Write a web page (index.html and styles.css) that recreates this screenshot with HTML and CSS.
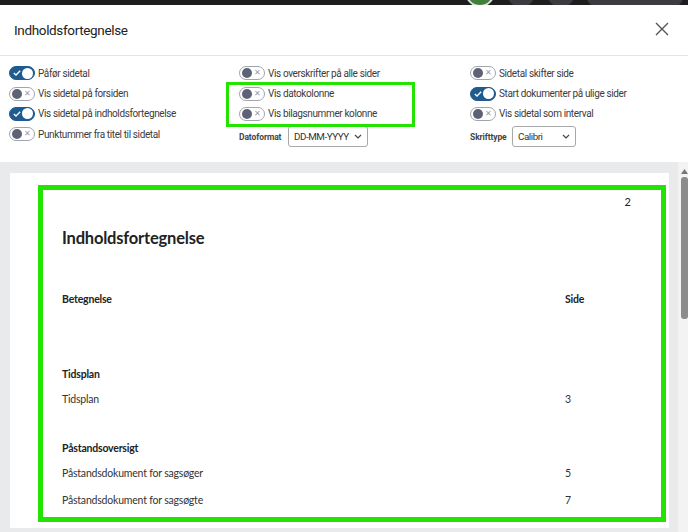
FILE: index.html
```html
<!DOCTYPE html>
<html lang="da">
<head>
<meta charset="utf-8">
<title>Indholdsfortegnelse</title>
<link rel="stylesheet" href="styles.css">
</head>
<body>
<div class="topbar">
  <span class="bg-dot green"></span>
  <span class="bg-dot"></span>
  <span class="bg-dot"></span>
  <span class="bg-pill"></span>
</div>
<div class="modal">
  <header class="modal-header">
    <h1 class="modal-title">Indholdsfortegnelse</h1>
    <svg class="close" width="14" height="14" viewBox="0 0 14 14"><path d="M1 1 L13 13 M13 1 L1 13" stroke="#555" stroke-width="1.4" fill="none"/></svg>
  </header>
  <section class="options">
    <div class="col">
      <label class="opt"><span class="tg on"><svg class="chk" width="8" height="6" viewBox="0 0 8 6"><path d="M0.8 3 L3 5 L7.2 0.8" stroke="#fff" stroke-width="1.3" fill="none"/></svg><span class="knob"></span></span>Påfør sidetal</label>
      <label class="opt"><span class="tg"><span class="knob"></span><span class="x">✕</span></span>Vis sidetal på forsiden</label>
      <label class="opt"><span class="tg on"><svg class="chk" width="8" height="6" viewBox="0 0 8 6"><path d="M0.8 3 L3 5 L7.2 0.8" stroke="#fff" stroke-width="1.3" fill="none"/></svg><span class="knob"></span></span>Vis sidetal på indholdsfortegnelse</label>
      <label class="opt"><span class="tg"><span class="knob"></span><span class="x">✕</span></span>Punktummer fra titel til sidetal</label>
    </div>
    <div class="col">
      <label class="opt"><span class="tg"><span class="knob"></span><span class="x">✕</span></span>Vis overskrifter på alle sider</label>
      <label class="opt"><span class="tg"><span class="knob"></span><span class="x">✕</span></span>Vis datokolonne</label>
      <label class="opt"><span class="tg"><span class="knob"></span><span class="x">✕</span></span>Vis bilagsnummer kolonne</label>
      <div class="sel-row"><span class="sel-label">Datoformat</span><span class="select w80">DD-MM-YYYY<svg class="chev" width="8" height="5" viewBox="0 0 8 5"><path d="M1 1 L4 4 L7 1" stroke="#444" stroke-width="1.2" fill="none"/></svg></span></div>
    </div>
    <div class="col">
      <label class="opt"><span class="tg"><span class="knob"></span><span class="x">✕</span></span>Sidetal skifter side</label>
      <label class="opt"><span class="tg on"><svg class="chk" width="8" height="6" viewBox="0 0 8 6"><path d="M0.8 3 L3 5 L7.2 0.8" stroke="#fff" stroke-width="1.3" fill="none"/></svg><span class="knob"></span></span>Start dokumenter på ulige sider</label>
      <label class="opt"><span class="tg"><span class="knob"></span><span class="x">✕</span></span>Vis sidetal som interval</label>
      <div class="sel-row"><span class="sel-label">Skrifttype</span><span class="select w64">Calibri<svg class="chev" width="8" height="5" viewBox="0 0 8 5"><path d="M1 1 L4 4 L7 1" stroke="#444" stroke-width="1.2" fill="none"/></svg></span></div>
    </div>
    <div class="mark-small"></div>
  </section>
  <section class="preview">
    <div class="page">
      <div class="mark-big">
        <div class="pno">2</div>
        <h2 class="doc-title">Indholdsfortegnelse</h2>
        <div class="row head"><span>Betegnelse</span><span class="num">Side</span></div>
        <div class="row group g1"><span>Tidsplan</span></div>
        <div class="row item"><span>Tidsplan</span><span class="num">3</span></div>
        <div class="row group g2"><span>Påstandsoversigt</span></div>
        <div class="row item"><span>Påstandsdokument for sagsøger</span><span class="num">5</span></div>
        <div class="row item i2"><span>Påstandsdokument for sagsøgte</span><span class="num">7</span></div>
      </div>
    </div>
    <div class="scrollbar">
      <svg class="up" width="7" height="5" viewBox="0 0 7 5"><path d="M0 5 L3.5 0 L7 5 Z" fill="#777"/></svg>
      <div class="thumb"></div>
    </div>
  </section>
</div>
</body>
</html>
```

FILE: styles.css
```css
* { box-sizing: border-box; }
html, body { margin: 0; padding: 0; }
body {
  width: 688px;
  height: 532px;
  overflow: hidden;
  background: #fff;
  font-family: Roboto, "Liberation Sans", sans-serif;
  color: #333;
}
.topbar {
  height: 5px;
  background: #1e1e1e;
  display: flex;
  align-items: flex-end;
  overflow: hidden;
  padding-left: 465px;
  gap: 12px;
}
.bg-dot {
  flex: none;
  width: 28px;
  height: 28px;
  border-radius: 50%;
  background: #3a3c40;
  margin-bottom: -2px;
}
.bg-dot.green { background: #3f7f3a; border: 2px solid #ddd; width: 30px; height: 30px; }
.bg-pill {
  flex: none;
  width: 96px;
  height: 28px;
  border-radius: 10px;
  background: #3a3c40;
  margin-bottom: -2px;
}
.modal { background: #fff; }
.modal-header {
  height: 51px;
  border-bottom: 1px solid #e4e4e4;
  display: flex;
  align-items: center;
  justify-content: space-between;
  padding: 0 19px 0 14px;
}
.modal-title {
  margin: 0;
  font-size: 13.5px;
  font-weight: 400;
  color: #222;
  letter-spacing: -0.35px;
}
.close { margin-top: -2px; }
.options {
  position: relative;
  height: 106px;
  display: grid;
  grid-template-columns: 230px 231px 1fr;
  padding: 7px 0 0 9px;
}
.col { display: flex; flex-direction: column; }
.opt {
  height: 20.4px;
  display: flex;
  align-items: center;
  gap: 3px;
  font-size: 10px;
  letter-spacing: -0.38px;
  color: #3c3c3c;
  white-space: nowrap;
}
.tg {
  flex: none;
  width: 26px;
  height: 14px;
  border-radius: 7px;
  border: 1px solid #a3a5ad;
  background: #fff;
  display: flex;
  align-items: center;
  justify-content: space-between;
  padding: 0 2px 0 2px;
}
.tg .knob {
  width: 10px;
  height: 10px;
  border-radius: 50%;
  background: #5e6276;
}
.tg .x { font-size: 8px; color: #9a9ca5; line-height: 1; margin-right: 1px; }
.tg.on { background: #1f5b8f; border-color: #1f5b8f; padding: 0 1px 0 3px; }
.tg.on .knob { background: #fff; width: 11px; height: 11px; }
.sel-row {
  display: flex;
  align-items: center;
  margin-top: 2px;
  height: 21px;
}
.sel-label {
  font-size: 8.5px;
  font-weight: 700;
  color: #444;
  width: 49px;
  letter-spacing: -0.1px;
}
.col:nth-child(3) .sel-label { width: 42px; }
.select {
  height: 21px;
  border: 1px solid #a8a8a8;
  border-radius: 3px;
  display: flex;
  align-items: center;
  justify-content: space-between;
  padding: 0 5px 0 5px;
  font-size: 9.8px;
  letter-spacing: -0.45px;
  white-space: nowrap;
  color: #333;
}
.w80 { width: 80px; }
.w64 { width: 64px; }
.mark-small {
  position: absolute;
  left: 226px;
  top: 26px;
  width: 189px;
  height: 45px;
  border: 3px solid #22e400;
  pointer-events: none;
}
.preview {
  height: 370px;
  background: #e9eaec;
  display: flex;
  padding: 11px 0 0 10px;
}
.page {
  width: 659px;
  height: 355px;
  background: #fff;
  padding: 12px 3px 0 28px;
  flex: none;
}
.mark-big {
  height: 337px;
  border: 5px solid #22e400;
  padding: 0 0 0 19px;
  font-family: Lato, "Open Sans", sans-serif;
  color: #222;
}
.pno {
  font-size: 11px;
  text-align: right;
  padding-right: 30px;
  margin-top: 5px;
  line-height: 14px;
}
.doc-title {
  margin: 19px 0 0 0;
  font-size: 16.5px;
  font-weight: 700;
  line-height: 20px;
  letter-spacing: -0.2px;
}
.row {
  display: flex;
  font-size: 10.5px;
  line-height: 14px;
  letter-spacing: -0.2px;
}
.row span:first-child { width: 503px; }
.row.head { margin-top: 44px; font-weight: 700; }
.row.group { font-weight: 700; }
.g1 { margin-top: 61px; }
.g2 { margin-top: 35px; }
.row.item { margin-top: 11px; color: #333; }
.row.item.i2 { margin-top: 13px; }
.scrollbar {
  margin-left: 9px;
  margin-top: -11px;
  width: 10px;
  background: #f3f3f3;
  display: flex;
  flex-direction: column;
  align-items: center;
  padding-top: 7px;
}
.up { margin-left: 2px; }
.thumb {
  margin-top: 3px;
  margin-left: 3px;
  width: 7px;
  height: 142px;
  border-radius: 3px;
  background: #8c8c8c;
}
```
